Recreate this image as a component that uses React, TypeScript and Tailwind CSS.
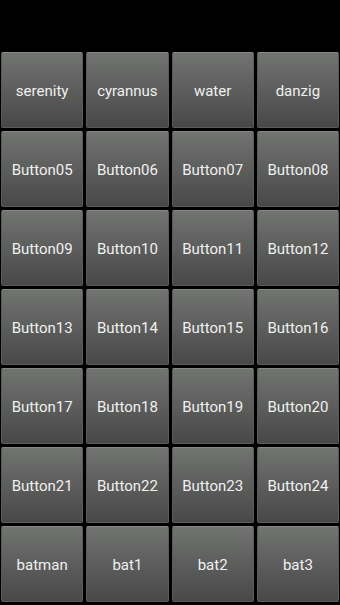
import React from "react";

const LABELS = [
  "serenity",
  "cyrannus",
  "water",
  "danzig",
  "Button05",
  "Button06",
  "Button07",
  "Button08",
  "Button09",
  "Button10",
  "Button11",
  "Button12",
  "Button13",
  "Button14",
  "Button15",
  "Button16",
  "Button17",
  "Button18",
  "Button19",
  "Button20",
  "Button21",
  "Button22",
  "Button23",
  "Button24",
  "batman",
  "bat1",
  "bat2",
  "bat3",
];

export default function App() {
  return (
    <div
      className="w-[340px] h-[605px] bg-black overflow-hidden pt-[52px] px-[1px]"
      style={{ fontFamily: 'Roboto, "Noto Sans", sans-serif' }}
    >
      <div className="grid grid-cols-4 gap-x-[3px] gap-y-[3px] auto-rows-[76px]">
        {LABELS.map((label) => (
          <button
            key={label}
            className="flex items-center justify-center pt-[2px] rounded-[2px] border border-[#5a5c5a] border-t-[#868886] bg-gradient-to-b from-[#727472] to-[#474847] text-[15px] text-[#f0f0f0]"
          >
            {label}
          </button>
        ))}
      </div>
    </div>
  );
}
